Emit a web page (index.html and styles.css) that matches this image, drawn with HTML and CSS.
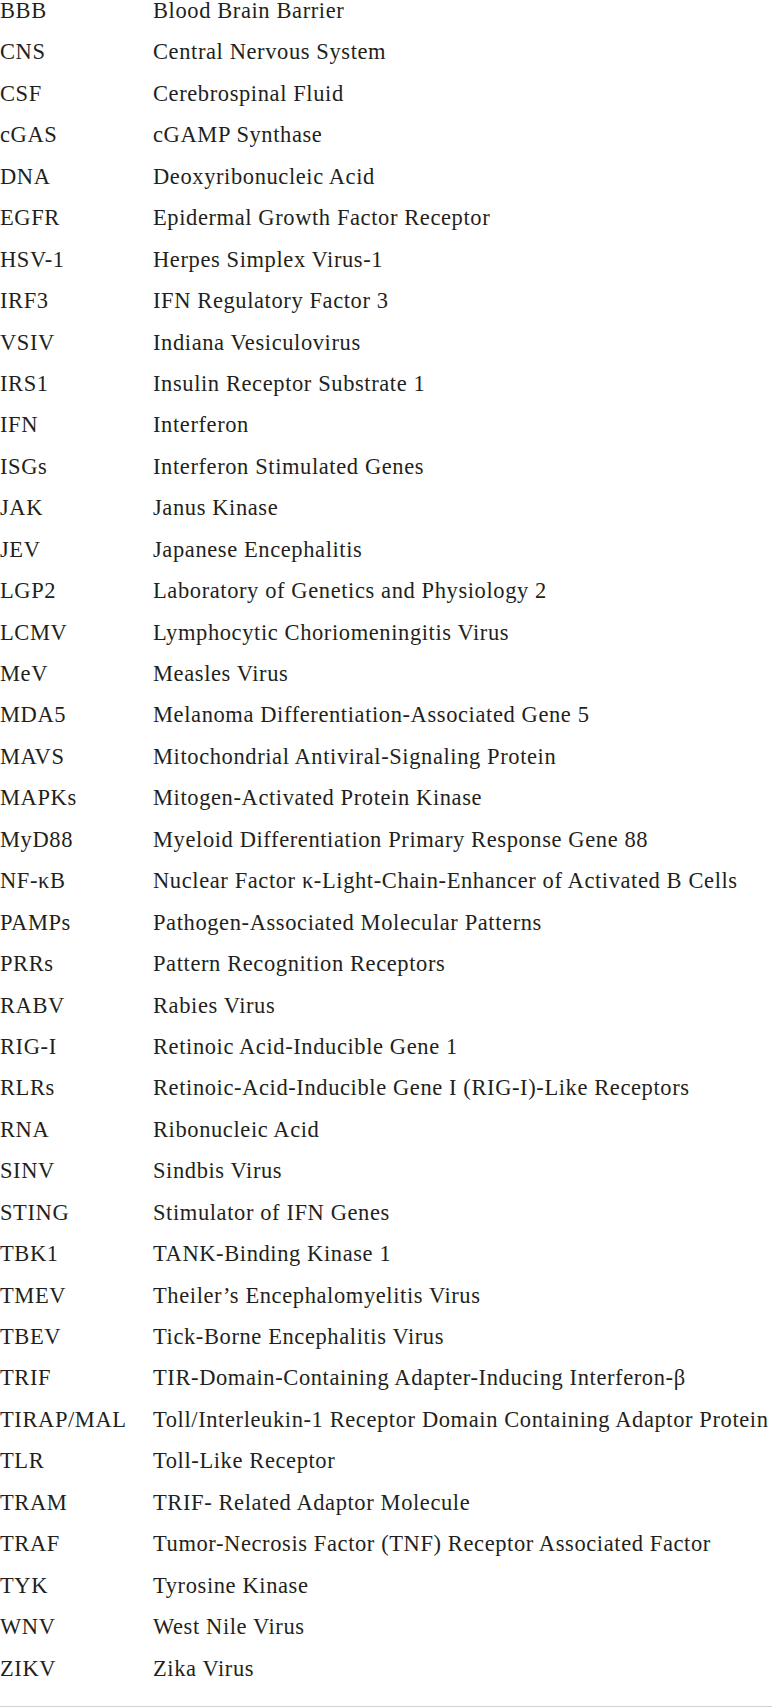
FILE: index.html
```html
<!DOCTYPE html>
<html lang="en">
<head>
<meta charset="utf-8">
<title>Abbreviations</title>
<link rel="stylesheet" href="styles.css">
</head>
<body>
<div class="glossary">
  <div class="row"><span class="abbr">BBB</span><span class="term">Blood Brain Barrier</span></div>
  <div class="row"><span class="abbr">CNS</span><span class="term">Central Nervous System</span></div>
  <div class="row"><span class="abbr">CSF</span><span class="term">Cerebrospinal Fluid</span></div>
  <div class="row"><span class="abbr">cGAS</span><span class="term">cGAMP Synthase</span></div>
  <div class="row"><span class="abbr">DNA</span><span class="term">Deoxyribonucleic Acid</span></div>
  <div class="row"><span class="abbr">EGFR</span><span class="term">Epidermal Growth Factor Receptor</span></div>
  <div class="row"><span class="abbr">HSV-1</span><span class="term">Herpes Simplex Virus-1</span></div>
  <div class="row"><span class="abbr">IRF3</span><span class="term">IFN Regulatory Factor 3</span></div>
  <div class="row"><span class="abbr">VSIV</span><span class="term">Indiana Vesiculovirus</span></div>
  <div class="row"><span class="abbr">IRS1</span><span class="term">Insulin Receptor Substrate 1</span></div>
  <div class="row"><span class="abbr">IFN</span><span class="term">Interferon</span></div>
  <div class="row"><span class="abbr">ISGs</span><span class="term">Interferon Stimulated Genes</span></div>
  <div class="row"><span class="abbr">JAK</span><span class="term">Janus Kinase</span></div>
  <div class="row"><span class="abbr">JEV</span><span class="term">Japanese Encephalitis</span></div>
  <div class="row"><span class="abbr">LGP2</span><span class="term">Laboratory of Genetics and Physiology 2</span></div>
  <div class="row"><span class="abbr">LCMV</span><span class="term">Lymphocytic Choriomeningitis Virus</span></div>
  <div class="row"><span class="abbr">MeV</span><span class="term">Measles Virus</span></div>
  <div class="row"><span class="abbr">MDA5</span><span class="term">Melanoma Differentiation-Associated Gene 5</span></div>
  <div class="row"><span class="abbr">MAVS</span><span class="term">Mitochondrial Antiviral-Signaling Protein</span></div>
  <div class="row"><span class="abbr">MAPKs</span><span class="term">Mitogen-Activated Protein Kinase</span></div>
  <div class="row"><span class="abbr">MyD88</span><span class="term">Myeloid Differentiation Primary Response Gene 88</span></div>
  <div class="row"><span class="abbr">NF-κB</span><span class="term">Nuclear Factor κ-Light-Chain-Enhancer of Activated B Cells</span></div>
  <div class="row"><span class="abbr">PAMPs</span><span class="term">Pathogen-Associated Molecular Patterns</span></div>
  <div class="row"><span class="abbr">PRRs</span><span class="term">Pattern Recognition Receptors</span></div>
  <div class="row"><span class="abbr">RABV</span><span class="term">Rabies Virus</span></div>
  <div class="row"><span class="abbr">RIG-I</span><span class="term">Retinoic Acid-Inducible Gene 1</span></div>
  <div class="row"><span class="abbr">RLRs</span><span class="term">Retinoic-Acid-Inducible Gene I (RIG-I)-Like Receptors</span></div>
  <div class="row"><span class="abbr">RNA</span><span class="term">Ribonucleic Acid</span></div>
  <div class="row"><span class="abbr">SINV</span><span class="term">Sindbis Virus</span></div>
  <div class="row"><span class="abbr">STING</span><span class="term">Stimulator of IFN Genes</span></div>
  <div class="row"><span class="abbr">TBK1</span><span class="term">TANK-Binding Kinase 1</span></div>
  <div class="row"><span class="abbr">TMEV</span><span class="term">Theiler’s Encephalomyelitis Virus</span></div>
  <div class="row"><span class="abbr">TBEV</span><span class="term">Tick-Borne Encephalitis Virus</span></div>
  <div class="row"><span class="abbr">TRIF</span><span class="term">TIR-Domain-Containing Adapter-Inducing Interferon-β</span></div>
  <div class="row"><span class="abbr">TIRAP/MAL</span><span class="term">Toll/Interleukin-1 Receptor Domain Containing Adaptor Protein</span></div>
  <div class="row"><span class="abbr">TLR</span><span class="term">Toll-Like Receptor</span></div>
  <div class="row"><span class="abbr">TRAM</span><span class="term">TRIF- Related Adaptor Molecule</span></div>
  <div class="row"><span class="abbr">TRAF</span><span class="term">Tumor-Necrosis Factor (TNF) Receptor Associated Factor</span></div>
  <div class="row"><span class="abbr">TYK</span><span class="term">Tyrosine Kinase</span></div>
  <div class="row"><span class="abbr">WNV</span><span class="term">West Nile Virus</span></div>
  <div class="row"><span class="abbr">ZIKV</span><span class="term">Zika Virus</span></div>
</div>
</body>
</html>
```
FILE: styles.css
```css
html, body {
  margin: 0;
  padding: 0;
  background: #ffffff;
}

body {
  font-family: "Liberation Serif", "Times New Roman", serif;
  font-size: 22.5px;
  letter-spacing: 0.6px;
  color: #231f20;
  overflow: hidden;
}

.glossary {
  margin-top: -10px;
  padding-bottom: 17px;
  border-bottom: 2px solid #d2d2d2;
}

.row {
  display: grid;
  grid-template-columns: 153px 1fr;
  height: 41.45px;
  line-height: 41.45px;
  white-space: nowrap;
}

.abbr,
.term {
  display: block;
}
```
